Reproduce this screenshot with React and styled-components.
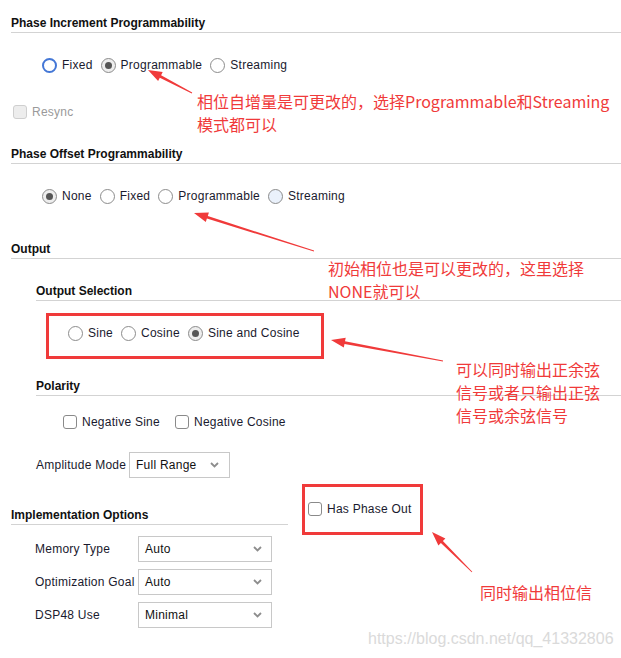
import React from 'react';
import styled, { createGlobalStyle } from 'styled-components';

// Page-wide defaults
const GlobalStyle = createGlobalStyle`
  body {
    margin: 0;
    background: #fff;
    font-family: "Liberation Sans", Arial, sans-serif;
  }
`;

const RED = '#f03a3a';

const Page = styled.div`
  position: relative;
  width: 621px;
  height: 658px;
  overflow: hidden;
  padding-left: 11px;
  box-sizing: border-box;
  color: #1a1a2e;
  font-size: 12px;
  letter-spacing: 0.25px;
`;

const Title = styled.div`
  margin-top: ${p => p.$top}px;
  font-weight: bold;
  font-size: 12px;
  line-height: 14px;
  letter-spacing: 0;
  color: #111;
  padding: 1px 0 2px;
  border-bottom: 1px solid #d3d3d3;
`;

const Indent = styled.div`
  margin-left: ${p => p.$left}px;
`;

const Row = styled.div`
  display: flex;
  align-items: center;
  height: 16px;
  margin-top: ${p => p.$top || 0}px;
  margin-left: ${p => p.$left || 0}px;
  gap: ${p => p.$gap || 8}px;
`;

const Item = styled.label`
  display: flex;
  align-items: center;
  gap: 5px;
  line-height: 16px;
  color: ${p => (p.$disabled ? '#9a9a9a' : 'inherit')};
`;

const RadioDot = styled.span`
  box-sizing: border-box;
  width: 15px;
  height: 15px;
  border-radius: 50%;
  border: ${p => (p.$focus ? '2px solid #4477d6' : '1px solid #8c8c8c')};
  background: ${p => (p.$checked ? '#ededed' : p.$hover ? '#eaf1fb' : '#fff')};
  display: flex;
  align-items: center;
  justify-content: center;

  &::after {
    content: '';
    display: ${p => (p.$checked ? 'block' : 'none')};
    width: 7px;
    height: 7px;
    border-radius: 50%;
    background: #555;
  }
`;

const CheckBox = styled.span`
  box-sizing: border-box;
  width: 14px;
  height: 14px;
  border-radius: 3px;
  border: 1.5px solid ${p => (p.$disabled ? '#cfcfcf' : '#8a8a8a')};
  background: ${p => (p.$disabled ? '#ededed' : '#fff')};
`;

const HighlightBox = styled.div`
  box-sizing: border-box;
  width: ${p => p.$w}px;
  height: ${p => p.$h}px;
  margin-top: ${p => p.$top}px;
  margin-left: ${p => p.$left}px;
  border: 3px solid ${RED};
  padding: ${p => p.$pad};
`;

const FieldRow = styled.div`
  display: flex;
  align-items: center;
  margin-top: ${p => p.$top}px;
`;

const FieldLabel = styled.span`
  width: ${p => p.$w}px;
  line-height: 14px;
`;

const Select = styled.div`
  box-sizing: border-box;
  width: ${p => p.$w}px;
  height: 26px;
  border: 1px solid #c8c8c8;
  background: #fff;
  display: flex;
  align-items: center;
  justify-content: space-between;
  padding: 0 ${p => p.$right}px 0 6px;
  color: #111;
`;

const Bottom = styled.div`
  display: flex;
  align-items: flex-start;
  margin-top: 6px;
`;

const LeftCol = styled.div`
  width: 277px;
`;

const FieldGrid = styled.div`
  display: grid;
  grid-template-columns: 103px 134px;
  row-gap: 7px;
  align-items: center;
  margin-top: 11px;
  padding-left: 24px;
`;

const Note = styled.div`
  position: absolute;
  left: ${p => p.$x}px;
  top: ${p => p.$y}px;
  white-space: pre;
  font-family: "Noto Sans CJK SC", "Liberation Sans", sans-serif;
  font-size: 16px;
  line-height: 23px;
  letter-spacing: 0;
  color: ${RED};
`;

const Watermark = styled.div`
  position: absolute;
  left: 368px;
  top: 629px;
  font-size: 16px;
  line-height: 20px;
  letter-spacing: 0;
  color: #dadada;
`;

const Overlay = styled.svg`
  position: absolute;
  left: 0;
  top: 0;
  pointer-events: none;
`;

const Chevron = () => (
  <svg width="9" height="6" viewBox="0 0 9 6">
    <path d="M1 1 L4.5 4.5 L8 1" fill="none" stroke="#8d8d8d" strokeWidth="1.8" />
  </svg>
);

const Radio = ({ label, checked, focus, hover }) => (
  <Item>
    <RadioDot $checked={checked} $focus={focus} $hover={hover} />
    {label}
  </Item>
);

const Check = ({ label, disabled }) => (
  <Item $disabled={disabled}>
    <CheckBox $disabled={disabled} />
    {label}
  </Item>
);

// tapered arrow: thin tail, wider near the head
function arrowPoints([tx, ty], [hx, hy]) {
  const len = Math.hypot(hx - tx, hy - ty);
  const dx = (hx - tx) / len;
  const dy = (hy - ty) / len;
  const nx = -dy;
  const ny = dx;
  const bx = hx - dx * 14;
  const by = hy - dy * 14;
  const pt = (x, y, w) => `${(x + nx * w).toFixed(1)},${(y + ny * w).toFixed(1)}`;
  return [
    pt(tx, ty, 0.4),
    pt(bx, by, 1.4),
    pt(bx, by, 5),
    `${hx},${hy}`,
    pt(bx, by, -5),
    pt(bx, by, -1.4),
    pt(tx, ty, -0.4),
  ].join(' ');
}

const arrows = [
  [[192, 93], [148, 70]],
  [[314, 251], [194, 213]],
  [[443, 361], [331, 340]],
  [[472, 572], [432, 532]],
];

export default function App() {
  return (
    <>
      <GlobalStyle />
      <Page>
        <Title $top={15}>Phase Increment Programmability</Title>
        <Row $top={24} $left={31}>
          <Radio label="Fixed" focus />
          <Radio label="Programmable" checked />
          <Radio label="Streaming" />
        </Row>
        <Row $top={31} $left={2}>
          <Check label="Resync" disabled />
        </Row>

        <Title $top={26}>Phase Offset Programmability</Title>
        <Row $top={24} $left={31}>
          <Radio label="None" checked />
          <Radio label="Fixed" />
          <Radio label="Programmable" />
          <Radio label="Streaming" hover />
        </Row>

        <Title $top={37}>Output</Title>
        <Indent $left={25}>
          <Title $top={24}>Output Selection</Title>
          <HighlightBox $w={278} $h={46} $top={12} $left={10} $pad="9px 0 0 19px">
            <Row>
              <Radio label="Sine" />
              <Radio label="Cosine" />
              <Radio label="Sine and Cosine" checked />
            </Row>
          </HighlightBox>

          <Title $top={19}>Polarity</Title>
          <Row $top={18} $left={27} $gap={15}>
            <Check label="Negative Sine" />
            <Check label="Negative Cosine" />
          </Row>

          <FieldRow $top={22}>
            <FieldLabel $w={93}>Amplitude Mode</FieldLabel>
            <Select $w={101} $right={10}>
              Full Range <Chevron />
            </Select>
          </FieldRow>
        </Indent>

        <Bottom>
          <LeftCol>
            <Title $top={23}>Implementation Options</Title>
            <FieldGrid>
              <FieldLabel>Memory Type</FieldLabel>
              <Select $w={134} $right={9}>
                Auto <Chevron />
              </Select>
              <FieldLabel>Optimization Goal</FieldLabel>
              <Select $w={134} $right={9}>
                Auto <Chevron />
              </Select>
              <FieldLabel>DSP48 Use</FieldLabel>
              <Select $w={134} $right={9}>
                Minimal <Chevron />
              </Select>
            </FieldGrid>
          </LeftCol>
          <HighlightBox $w={121} $h={51} $top={0} $left={14} $pad="14px 0 0 3px">
            <Row>
              <Check label="Has Phase Out" />
            </Row>
          </HighlightBox>
        </Bottom>

        <Note $x={197} $y={90}>{'相位自增量是可更改的，选择Programmable和Streaming\n模式都可以'}</Note>
        <Note $x={328} $y={257}>{'初始相位也是可以更改的，这里选择\nNONE就可以'}</Note>
        <Note $x={456} $y={358}>{'可以同时输出正余弦\n信号或者只输出正弦\n信号或余弦信号'}</Note>
        <Note $x={480} $y={581}>同时输出相位信</Note>
        <Watermark>https://blog.csdn.net/qq_41332806</Watermark>

        <Overlay width="621" height="658" viewBox="0 0 621 658">
          {arrows.map(([tail, head], i) => (
            <polygon key={i} points={arrowPoints(tail, head)} fill={RED} />
          ))}
        </Overlay>
      </Page>
    </>
  );
}
